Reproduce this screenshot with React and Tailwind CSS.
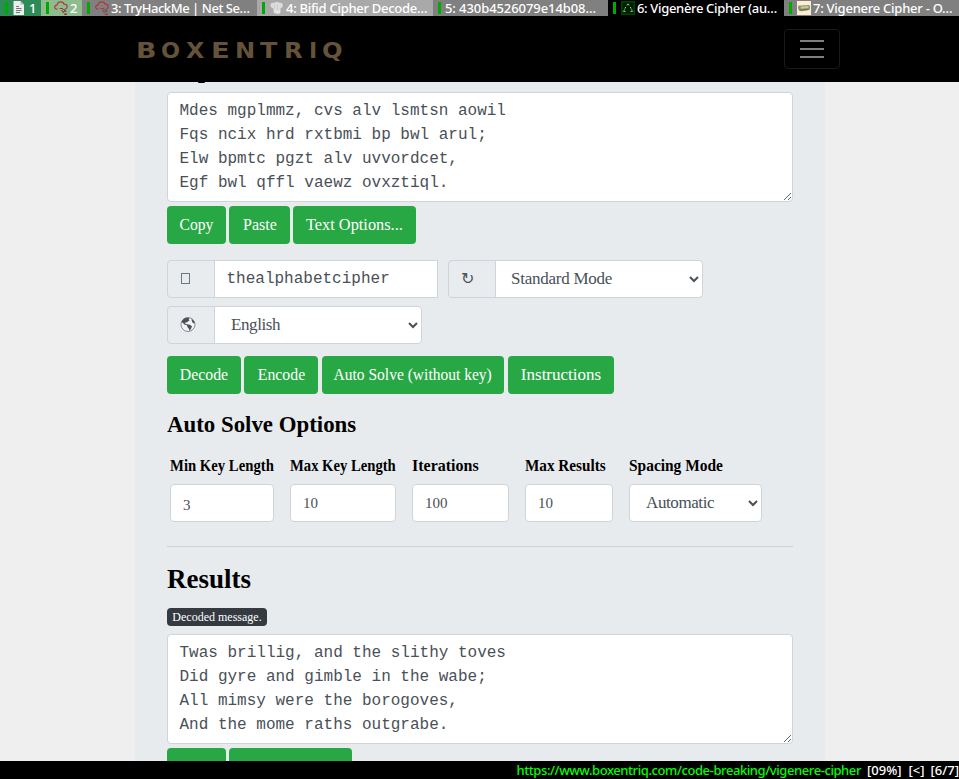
import React from 'react';

const FileIcon = () => (
  <svg width="14" height="14" viewBox="0 0 14 14" className="shrink-0">
    <path d="M.5 0H7.500L11 3.500V14H.5Z" fill="#eee" />
    <path d="M7.500 0V3.500H11Z" fill="#b5b5b5" />
    <path d="M3 5.500H6M3 7.500H8.500M3 9.500H8.500M3 11.500H7" stroke="#777" strokeWidth="1" />
  </svg>
);

const CloudIcon = () => (
  <svg width="14" height="14" viewBox="0 0 14 14" className="shrink-0" fill="none">
    <path d="M3.500 8.200C1.200 8.200.4 7 .7 5.800 1 4.400 2 4 3 4.100 3.300 2 4.800.8 6.600.8 8.500.8 9.700 1.900 10 3.200 12 3.100 13.200 4.200 13.200 5.600 13.200 6.900 12.300 7.700 11.200 8" stroke="#b8323a" strokeWidth="1.200" />
    <path d="M5.500 7.500H9M7 9.500H8.500M10 9.500H12M8.500 11.500H10M10 13.500H13" stroke="#b8323a" strokeWidth="1" />
    <path d="M8.500 8.500H11.500M8 10.500H12.500M10.500 12.500H12.500" stroke="#666" strokeWidth="1" />
  </svg>
);

const ChefIcon = () => (
  <svg width="14" height="14" viewBox="0 0 14 14" className="shrink-0">
    <path d="M.5 4.500C.3 2.500 2 1.300 3.800 2 5.500.6 8.500.6 9.600 2 11.600 1.300 13.100 3 12.800 4.800 12.600 6.300 11.300 7 10.600 7.300L10.300 12C9 13.500 5.500 13.200 3.800 11.500L3.300 7.500C1.800 7.200.6 6 .5 4.500Z" fill="#dcdcdc" />
    <path d="M4.500 4V8M7.500 3.500V9" stroke="#cacaca" strokeWidth="1" />
    <path d="M4 10C6 11.200 8.500 11.200 10.300 10" stroke="#f2f2f2" fill="none" />
  </svg>
);

const TriangleIcon = () => (
  <svg width="14" height="14" viewBox="0 0 14 14" className="shrink-0" fill="none">
    <rect width="14" height="14" fill="#004400" />
    <rect x="1.500" y="1.500" width="11" height="11" fill="#001c00" />
    <path d="M5.500 4.500L7 3L8.500 4.500M4.500 6.500L2.500 10.500H5M9.500 6.500L11.500 10.500H9" stroke="#2f7f3d" strokeWidth="1.200" />
    <path d="M6.300 3.500H7.700M2.500 10.300H4M10 10.300H11.500M4 6.500H5M9 6.500H10" stroke="#8fce98" />
  </svg>
);

const ScrollIcon = () => (
  <svg width="14" height="14" viewBox="0 0 14 14" className="shrink-0">
    <rect width="14" height="14" fill="#fbeed2" />
    <path d="M1 6C1 4.500 2.500 4.300 4 4.600L12 4C13.300 4.200 13.500 8 12.300 9L4.500 10.300C2.500 10.300 1 9 1 6Z" fill="#8f926b" />
    <path d="M3.500 5.500L11.500 5V7L4 7.700Z" fill="#c5c6a4" />
    <path d="M2.500 9L11.500 8.500" stroke="#6d714d" />
  </svg>
);

const tabs = [
  { w: 'w-[41px]', bg: 'bg-[#2e8b57]', icon: <FileIcon />, text: '1', track: '' },
  { w: 'w-[41px]', bg: 'bg-[#8fbc8f]', icon: <CloudIcon />, text: '2', track: '' },
  { w: 'w-[175px]', bg: 'bg-[#808080]', icon: <CloudIcon />, text: '3: TryHackMe | Net Se…', track: 'tracking-[-0.45px]' },
  { w: 'w-[176px]', bg: 'bg-[#a9a9a9]', icon: <ChefIcon />, text: '4: Bifid Cipher Decode…', track: 'tracking-[-0.28px]' },
  { w: 'w-[175px]', bg: 'bg-[#808080]', icon: null, text: '5: 430b4526079e14b08…', track: 'tracking-[-0.08px]' },
  { w: 'w-[176px]', bg: 'bg-black', icon: <TriangleIcon />, text: '6: Vigenère Cipher (au…', track: 'tracking-[-0.33px]' },
  { w: 'w-[175px]', bg: 'bg-[#808080]', icon: <ScrollIcon />, text: '7: Vigenere Cipher - O…', track: 'tracking-[-0.25px]' },
];

function TabBar() {
  return (
    <div className="flex h-4 shrink-0 font-['Noto_Sans',sans-serif] text-[13px] font-medium leading-4 text-white">
      {tabs.map((t) => (
        <div key={t.text} className={`flex shrink-0 items-center overflow-hidden pl-[5px] ${t.w} ${t.bg}`}>
          <span className="h-3 w-[3px] shrink-0 bg-[#00aa00]" />
          {t.icon && <span className="ml-[5px] shrink-0">{t.icon}</span>}
          <span className={`whitespace-nowrap ${t.icon ? 'ml-[2px]' : 'ml-1'} ${t.track}`}>{t.text}</span>
        </div>
      ))}
    </div>
  );
}

const logo = [
  ['B', 'w-[25px]', 'scale-x-[1.22]'],
  ['O', 'w-[25px]', 'scale-x-[1.02]'],
  ['X', 'w-[25px]', 'scale-x-[1.08]'],
  ['E', 'w-[24px]', 'scale-x-[1.25]'],
  ['N', 'w-[25px]', 'scale-x-[1.1]'],
  ['T', 'w-[24px]', 'scale-x-[1.15]'],
  ['R', 'w-[25px]', 'scale-x-[1.1]'],
  ['I', 'w-[13px]', 'scale-x-[1]'],
  ['Q', 'w-[21px]', 'scale-x-[1.1]'],
];

function Navbar() {
  return (
    <nav className="flex h-[66px] shrink-0 items-center justify-between bg-black pl-[136px] pr-[119px]">
      <div className="flex pt-[3px] font-['DejaVu_Sans',sans-serif] text-[22px] font-bold leading-6 text-[#655339]">
        {logo.map(([c, w, s]) => (
          <span key={c} className={w}>
            <span className={`inline-block origin-left ${s}`}>{c}</span>
          </span>
        ))}
      </div>
      <button className="flex h-10 w-14 flex-col items-center justify-center gap-[6px] rounded-[4px] border border-[#1a1a1a]">
        <span className="h-[2px] w-6 bg-[#808080]" />
        <span className="h-[2px] w-6 bg-[#808080]" />
        <span className="h-[2px] w-6 bg-[#808080]" />
      </button>
    </nav>
  );
}

function Btn({ w, scale, children }) {
  return (
    <button className={`flex h-[38px] shrink-0 items-center justify-center whitespace-nowrap rounded-[4px] bg-[#28a745] text-[17px] text-white ${w}`}>
      <span className={scale}>{children}</span>
    </button>
  );
}

function Area({ text }) {
  return (
    <textarea
      spellCheck={false}
      defaultValue={text}
      className="block h-[110px] w-full shrink-0 overflow-hidden rounded-[4px] border border-[#ced4da] bg-white px-[11.5px] py-[6px] font-['Liberation_Mono',monospace] text-[16px] leading-6 text-[#495057]"
    />
  );
}

function Addon({ children }) {
  return (
    <span className="flex h-[38px] w-12 items-center rounded-l-[4px] border border-[#ced4da] bg-[#e9ecef] pl-3 text-[16px] text-[#495057]">
      {children}
    </span>
  );
}

function Select({ value, className }) {
  return (
    <select className={`h-[38px] border border-[#ced4da] bg-white pb-[2px] text-[17px] text-[#495057] ${className}`}>
      <option>{value}</option>
    </select>
  );
}

function Field({ label, w, scale, children }) {
  return (
    <div className={`flex shrink-0 flex-col gap-[6px] ${w}`}>
      <label className={`h-6 w-max origin-left whitespace-nowrap text-[16px] font-bold leading-6 text-black ${scale}`}>{label}</label>
      {children}
    </div>
  );
}

function NumberBox({ value, shift = '' }) {
  return (
    <div className="flex h-[38px] items-center rounded-[4px] border border-[#ced4da] bg-white pl-3 text-[15px] text-[#495057]">
      <span className={shift}>{value}</span>
    </div>
  );
}

const Globe = () => (
  <svg width="16" height="16" viewBox="0 0 16 16">
    <circle cx="8" cy="7.500" r="7" fill="#f1f3f4" stroke="#6b7177" strokeWidth=".8" />
    <path d="M1.600 5C2.500 2.300 5 .7 8 .8L9.500 1.600 8.600 2.600 9.800 3.300 8 4.200 7 5.500 5.500 5.300 5 6.500 6.800 7.200 9.800 7.800 12 9.300 11.200 11.200 9.800 13.900 9 12 7.500 10 6.800 8.200 4.400 7.500 3 6Z" fill="#495057" />
    <path d="M11.500 1.800L13.800 4 14.800 6.500 12.800 6 11.800 4Z" fill="#495057" />
  </svg>
);

export default function App() {
  return (
    <div className="flex h-[779px] w-[959px] flex-col overflow-hidden bg-[#efefef]">
      <TabBar />
      <Navbar />
      <main className="ml-[135px] flex h-[679px] w-[690px] shrink-0 flex-col overflow-hidden bg-[#e8ebee] px-8 font-['Liberation_Serif',serif]">
        <div className="h-[10px] shrink-0">
          <div className="ml-[31px] h-[1px] w-[7px] rounded-b bg-black" />
        </div>
        <Area text={'Mdes mgplmmz, cvs alv lsmtsn aowil\nFqs ncix hrd rxtbmi bp bwl arul;\nElw bpmtc pgzt alv uvvordcet,\nEgf bwl qffl vaewz ovxztiql.'} />
        <div className="mt-1 flex shrink-0 gap-[3px]">
          <Btn w="w-[59px]" scale="scale-x-[0.92]">Copy</Btn>
          <Btn w="w-[61px]" scale="scale-x-[0.94]">Paste</Btn>
          <Btn w="w-[123px]" scale="scale-x-[0.96]">Text Options...</Btn>
        </div>
        <div className="mt-4 flex shrink-0 gap-[10px]">
          <div className="flex">
            <Addon><span className="mb-[2px] ml-[1px] h-[11px] w-[9px] border border-[#71777c]" /></Addon>
            <input
              spellCheck={false}
              defaultValue="thealphabetcipher"
              className="-ml-px h-[38px] w-[224px] border border-[#ced4da] bg-white px-[11.5px] font-['Liberation_Mono',monospace] text-[16px] text-[#495057]"
            />
          </div>
          <div className="flex">
            <Addon><span className="font-['DejaVu_Sans',sans-serif]">↻</span></Addon>
            <Select value="Standard Mode" className="-ml-px w-[208px] rounded-r-[4px] pl-[11px] tracking-[-0.25px]" />
          </div>
        </div>
        <div className="mt-2 flex shrink-0">
          <Addon><Globe /></Addon>
          <Select value="English" className="-ml-px w-[208px] rounded-r-[4px] pl-3 tracking-[-0.4px]" />
        </div>
        <div className="mt-3 flex shrink-0">
          <Btn w="w-[74px]" scale="scale-x-[0.93]">Decode</Btn>
          <span className="w-[3px]" />
          <Btn w="w-[74px]" scale="scale-x-[0.93]">Encode</Btn>
          <span className="w-1" />
          <Btn w="w-[182px]" scale="scale-x-[0.913]">Auto Solve (without key)</Btn>
          <span className="w-1" />
          <Btn w="w-[106px]" scale="scale-x-[1]">Instructions</Btn>
        </div>
        <h3 className="mt-4 h-7 w-max shrink-0 origin-left scale-x-[0.952] text-[24px] font-bold leading-7 text-black">Auto Solve Options</h3>
        <div className="mt-4 flex shrink-0 gap-4 pl-[3px]">
          <Field label="Min Key Length" w="w-[104px]" scale="scale-x-[0.92]"><NumberBox value="3" shift="translate-y-[2px]" /></Field>
          <Field label="Max Key Length" w="w-[106px]" scale="scale-x-[0.915]"><NumberBox value="10" /></Field>
          <Field label="Iterations" w="w-[97px]" scale="scale-x-[1]"><NumberBox value="100" /></Field>
          <Field label="Max Results" w="w-[88px]" scale="scale-x-[0.95]"><NumberBox value="10" /></Field>
          <Field label="Spacing Mode" w="w-[133px]" scale="scale-x-[0.965]"><Select value="Automatic" className="w-full rounded-[4px] pl-3 tracking-[-0.4px]" /></Field>
        </div>
        <hr className="mt-6 shrink-0 border-t border-[#ced2d6]" />
        <h2 className="mt-4 h-8 w-max shrink-0 origin-left scale-x-[0.965] text-[28px] font-bold leading-8 text-black">Results</h2>
        <div className="mt-[13px] flex h-[18px] w-[100px] shrink-0 items-center justify-center whitespace-nowrap rounded-[4px] bg-[#343a40] text-[12px] leading-[18px] text-white">Decoded message.</div>
        <div className="h-2 shrink-0" />
        <Area text={'Twas brillig, and the slithy toves\nDid gyre and gimble in the wabe;\nAll mimsy were the borogoves,\nAnd the mome raths outgrabe.'} />
        <div className="mt-1 flex shrink-0 gap-[3px]">
          <Btn w="w-[59px]" scale="scale-x-[0.92]">Copy</Btn>
          <Btn w="w-[123px]" scale="scale-x-[0.96]">Text Options...</Btn>
        </div>
      </main>
      <footer className="flex h-[18px] shrink-0 items-center justify-end whitespace-pre bg-black font-['Noto_Sans',sans-serif] text-[13px] font-medium leading-[18px] text-white">
        <span className="tracking-[-0.42px] text-[#00ff00]">https://www.boxentriq.com/code-breaking/vigenere-cipher</span>
        <span className="ml-[6px]">[09%]</span>
        <span className="ml-[7px]">[&lt;]</span>
        <span className="ml-[6px]">[6/7]</span>
      </footer>
    </div>
  );
}
